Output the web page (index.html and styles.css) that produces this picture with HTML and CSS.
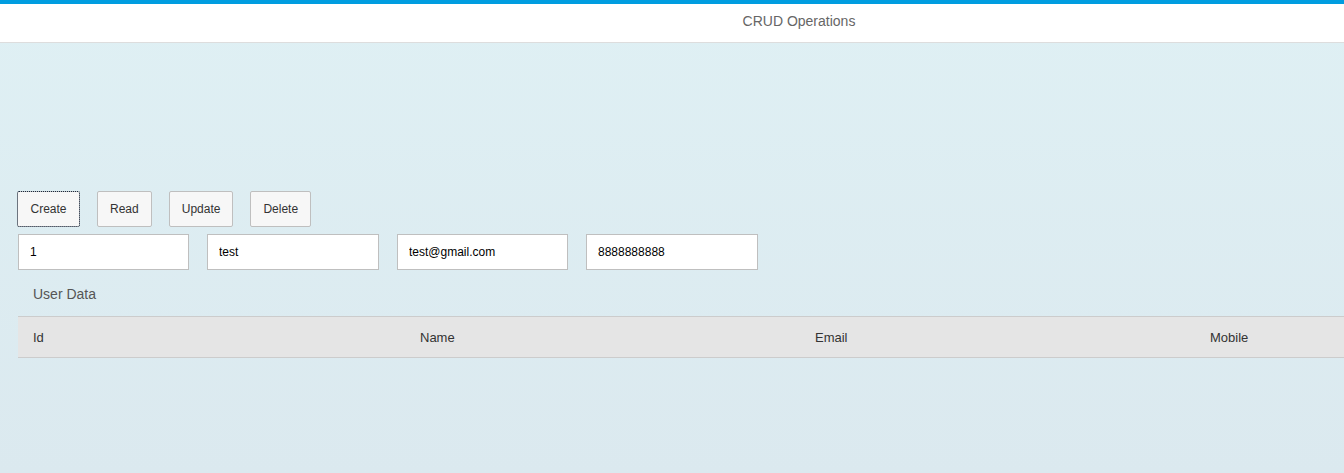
FILE: index.html
```
<!DOCTYPE html>
<html>
<head>
<meta charset="utf-8">
<link rel="stylesheet" href="styles.css">
</head>
<body>
<div class="shell">
  <header class="bar">
    <div class="title">CRUD Operations</div>
  </header>
  <main class="content">
    <div class="toolbar">
      <button class="btn focused">Create</button>
      <button class="btn">Read</button>
      <button class="btn">Update</button>
      <button class="btn">Delete</button>
    </div>
    <div class="fields">
      <input class="field" value="1">
      <input class="field" value="test">
      <input class="field" value="test@gmail.com">
      <input class="field" value="8888888888">
    </div>
    <div class="table-title">User Data</div>
    <div class="table">
      <div class="thead">
        <div class="th col1">Id</div>
        <div class="th">Name</div>
        <div class="th">Email</div>
        <div class="th">Mobile</div>
      </div>
    </div>
  </main>
</div>
</body>
</html>
```
FILE: styles.css
```
html, body {
  margin: 0;
  padding: 0;
  height: 100%;
  overflow: hidden;
}
body {
  font-family: "Liberation Sans", Arial, sans-serif;
  background: linear-gradient(to bottom, #dff0f4 0%, #dbe9ef 100%);
}
.shell {
  width: 1344px;
  height: 473px;
  overflow: hidden;
}
.bar {
  border-top: 4px solid #009de0;
  background: #ffffff;
  height: 38px;
  border-bottom: 1px solid #dddddd;
  display: flex;
  align-items: center;
  justify-content: center;
}
.title {
  font-size: 14px;
  color: #666666;
  margin-left: 254px;
  margin-top: -4px;
}
.content {
  padding: 148px 0 0 17px;
}
.toolbar {
  display: flex;
  gap: 17px;
  height: 36px;
}
.btn {
  font-family: "Liberation Sans", Arial, sans-serif;
  font-size: 12px;
  color: #333333;
  background: #f7f7f7;
  border: 1px solid #bfbfbf;
  border-radius: 2px;
  height: 36px;
  padding: 0 12px;
  margin: 0;
}
.focused {
  outline: 1px dotted #1a2a40;
  outline-offset: -1px;
  padding: 0 12.5px;
}
.fields {
  display: flex;
  gap: 18px;
  margin-top: 7px;
  margin-left: 1px;
}
.field {
  box-sizing: border-box;
  width: 171px;
  height: 36px;
  margin: 0;
  border: 1px solid #bfbfbf;
  background: #ffffff;
  font-family: "Liberation Sans", Arial, sans-serif;
  font-size: 12px;
  color: #000000;
  padding: 0 11px;
  border-radius: 0;
}
.field:nth-child(2) {
  width: 172px;
}
.field:nth-child(4) {
  width: 172px;
}
.table-title {
  font-size: 14px;
  color: #555555;
  margin: 16px 0 0 16px;
  height: 30px;
}
.table {
  margin-left: 1px;
  width: 1600px;
}
.thead {
  display: flex;
  height: 40px;
  align-items: center;
  background: #e5e5e5;
  border-top: 1px solid #cccccc;
  border-bottom: 1px solid #cccccc;
}
.th {
  width: 395px;
  box-sizing: border-box;
  padding-left: 15px;
  font-size: 13px;
  color: #333333;
}
.th.col1 {
  width: 387px;
}
```
